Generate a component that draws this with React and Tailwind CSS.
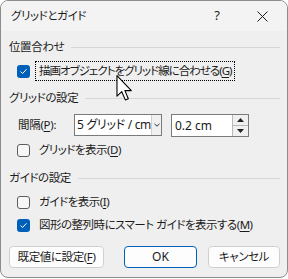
import React from 'react';

const font = "[font-family:'Noto_Sans','Noto_Sans_CJK_JP',sans-serif] [font-feature-settings:'palt']";

const Check = ({ checked }) =>
  checked ? (
    <span className="flex h-[13px] w-[13px] shrink-0 items-center justify-center rounded-[3px] bg-[#005fb8]">
      <svg width="9" height="9" viewBox="0 0 9 9" fill="none">
        <path d="M1.8 4.8L3.6 6.5L7.2 2.6" stroke="white" strokeWidth="1" strokeLinecap="round" strokeLinejoin="round" />
      </svg>
    </span>
  ) : (
    <span className="h-[13px] w-[13px] shrink-0 rounded-[3px] border border-[#5d5d5d] bg-[#f7f7f7]" />
  );

const Header = ({ children, className }) => (
  <div className={`flex h-[16px] items-center pl-[8px] pr-[7px] ${className}`}>
    <span className="whitespace-nowrap text-[11.5px] leading-[16px] tracking-[-0.4px] text-[#1b1b1b]">{children}</span>
    <span className="ml-[7px] h-px flex-1 bg-[#d6d6d6]" />
  </div>
);

const Row = ({ checked, focused, children, className }) => (
  <div className={`flex items-center pl-[16px] ${className}`}>
    <Check checked={checked} />
    <span
      className={`ml-[5px] whitespace-nowrap px-[3px] text-[11.5px] leading-[16px] text-[#1b1b1b] ${
        focused ? 'border border-dotted border-black py-[1px] tracking-[-1px]' : 'border border-transparent tracking-[-0.5px]'
      }`}
    >
      {children}
    </span>
  </div>
);

const U = ({ children }) => <span className="underline underline-offset-2">{children}</span>;

export default function App() {
  return (
    <div className={`relative h-[279px] w-[288px] bg-white ${font}`}>
      <div className="flex h-[278px] flex-col overflow-hidden rounded-[8px] border border-[#8c8c8c] bg-[#efefef]">
        {/* title bar */}
        <div className="flex h-[30px] shrink-0 items-center bg-[#f3f3f3] pl-[10px]">
          <span className="text-[11.5px] tracking-[-0.4px] text-[#1b1b1b]">グリッドとガイド</span>
          <span className="ml-auto mr-[37px] text-[13px] text-[#1b1b1b]">?</span>
          <svg className="mr-[19px]" width="11" height="11" viewBox="0 0 11 11">
            <path d="M0.5 0.5L10.5 10.5M10.5 0.5L0.5 10.5" stroke="#1b1b1b" strokeWidth="1" />
          </svg>
        </div>

        <Header className="mt-[8px]">位置合わせ</Header>
        <Row checked focused className="mt-[6px] h-[20px]">
          描画オブジェクトをグリッド線に合わせる(<U>G</U>)
        </Row>

        <Header className="mt-[9px]">グリッドの設定</Header>
        <div className="mt-[8px] flex h-[22px] items-center pl-[17px]">
          <span className="w-[56px] whitespace-nowrap text-[11.5px] tracking-[-0.3px] text-[#1b1b1b]">
            間隔(<U>P</U>):
          </span>
          <div className="flex h-[22px] w-[88px] border border-[#7a7a7a] bg-white">
            <span className="flex-1 whitespace-nowrap pl-[2px] text-[12px] leading-[20px] tracking-[-0.3px] text-[#1b1b1b]">5 グリッド / cm</span>
            <span className="flex w-[10px] items-center justify-center border-l border-[#d0d0d0] bg-[#f0f0f0]">
              <svg width="6" height="4" viewBox="0 0 6 4">
                <path d="M0.5 0.8L3 3.2L5.5 0.8" stroke="#333" strokeWidth="1" fill="none" />
              </svg>
            </span>
          </div>
          <div className="ml-[9px] flex h-[23px] w-[78px] border border-[#7a7a7a] bg-white">
            <span className="flex-1 pl-[3px] text-[12px] leading-[21px] text-[#1b1b1b]">0.2 cm</span>
            <span className="flex w-[16px] flex-col border-l border-[#b8b8b8]">
              <span className="flex flex-1 items-center justify-center border-b border-[#b8b8b8] bg-[#f0f0f0]">
                <svg width="7" height="4" viewBox="0 0 7 4"><path d="M0 4L3.5 0L7 4Z" fill="#222" /></svg>
              </span>
              <span className="flex flex-1 items-center justify-center bg-[#f0f0f0]">
                <svg width="7" height="4" viewBox="0 0 7 4"><path d="M0 0L3.5 4L7 0Z" fill="#222" /></svg>
              </span>
            </span>
          </div>
        </div>
        <Row className="mt-[5px] h-[18px]">
          グリッドを表示(<U>D</U>)
        </Row>

        <Header className="mt-[11px]">ガイドの設定</Header>
        <Row className="mt-[7px] h-[18px]">
          ガイドを表示(<U>I</U>)
        </Row>
        <Row checked className="mt-[5px] h-[18px]">
          図形の整列時にスマート ガイドを表示する(<U>M</U>)
        </Row>

        <div className="mt-[12px] flex h-[22px] items-center pl-[8px]">
          <button className="h-[22px] w-[95px] whitespace-nowrap rounded-[4px] border border-[#d0d0d0] bg-[#fdfdfd] text-[11.5px] tracking-[-0.4px] text-[#1b1b1b]">
            既定値に設定(<U>F</U>)
          </button>
          <button className="ml-[20px] h-[22px] w-[73px] rounded-[4px] border border-[#005fb8] bg-[#fdfdfd] text-[12px] text-[#1b1b1b]">
            OK
          </button>
          <button className="ml-[11px] h-[22px] w-[72px] rounded-[4px] border border-[#d0d0d0] bg-[#fdfdfd] text-[11.5px] tracking-[-0.4px] text-[#1b1b1b]">
            キャンセル
          </button>
        </div>
      </div>

      {/* mouse pointer */}
      <svg className="absolute left-[116px] top-[75px]" width="17" height="26" viewBox="0 0 12 19">
        <path d="M0.5 0.5V15.5L4 12.2L6.6 18.2L8.8 17.3L6.3 11.4H11Z" fill="white" stroke="black" strokeWidth="0.8" strokeLinejoin="round" />
      </svg>
    </div>
  );
}
